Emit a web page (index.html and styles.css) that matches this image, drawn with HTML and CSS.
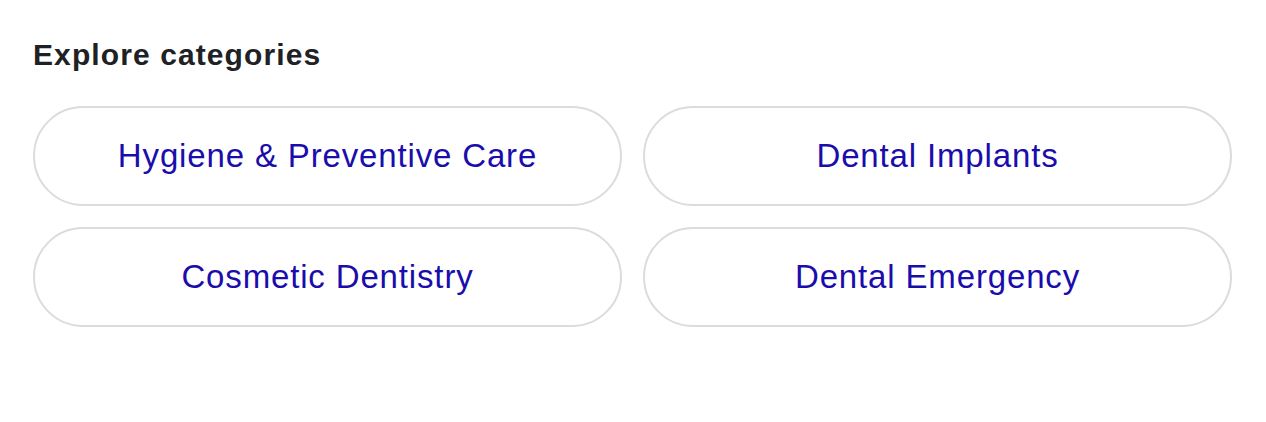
FILE: index.html
```html
<!DOCTYPE html>
<html lang="en">
<head>
<meta charset="utf-8">
<title>Explore categories</title>
<link rel="stylesheet" href="styles.css">
</head>
<body>
  <section class="categories">
    <h2 class="title">Explore categories</h2>
    <div class="grid">
      <a class="pill" href="#">Hygiene &amp; Preventive Care</a>
      <a class="pill" href="#">Dental Implants</a>
      <a class="pill" href="#">Cosmetic Dentistry</a>
      <a class="pill" href="#">Dental Emergency</a>
    </div>
  </section>
</body>
</html>
```
FILE: styles.css
```css
html, body {
  margin: 0;
  padding: 0;
  background: #ffffff;
}
body {
  font-family: "Liberation Sans", Arial, sans-serif;
}
.categories {
  padding: 38px 34px 0 33px;
}
.title {
  margin: 0 0 34px 0;
  font-size: 30px;
  font-weight: 700;
  line-height: 34px;
  letter-spacing: 1.1px;
  color: #202124;
}
.grid {
  display: grid;
  grid-template-columns: 1fr 1fr;
  column-gap: 21px;
  row-gap: 21px;
}
.pill {
  display: flex;
  align-items: center;
  justify-content: center;
  height: 100px;
  box-sizing: border-box;
  border: 2px solid #dadce0;
  border-radius: 50px;
  font-size: 33px;
  letter-spacing: 0.85px;
  color: #1a0dab;
  text-decoration: none;
}
```
